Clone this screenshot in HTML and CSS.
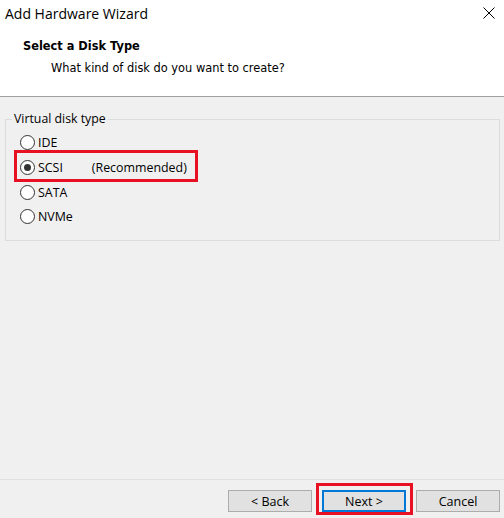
FILE: index.html
```html
<!DOCTYPE html>
<html>
<head>
<meta charset="utf-8">
<link rel="stylesheet" href="styles.css">
</head>
<body>
<div class="window">
  <div class="titlebar">
    <span class="title">Add Hardware Wizard</span>
    <svg class="close" width="12" height="12" viewBox="0 0 12 12"><path d="M0.5 0.5 L11.5 11.5 M11.5 0.5 L0.5 11.5" stroke="#000" stroke-width="1" fill="none"/></svg>
  </div>
  <div class="header">
    <div class="h-title">Select a Disk Type</div>
    <div class="h-sub">What kind of disk do you want to create?</div>
  </div>
  <div class="body">
    <fieldset class="group">
      <legend>Virtual disk type</legend>
      <div class="radio"><span class="dot"></span><span class="lbl">IDE</span></div>
      <div class="radio highlight"><span class="dot checked"></span><span class="lbl">SCSI</span><span class="rec">(Recommended)</span></div>
      <div class="radio"><span class="dot"></span><span class="lbl">SATA</span></div>
      <div class="radio"><span class="dot"></span><span class="lbl">NVMe</span></div>
    </fieldset>
  </div>
  <div class="footer">
    <button class="btn">&lt; Back</button>
    <button class="btn default">Next &gt;</button>
    <button class="btn">Cancel</button>
  </div>
</div>
</body>
</html>
```
FILE: styles.css
```css
html, body {
  margin: 0;
  padding: 0;
}
body {
  width: 504px;
  height: 518px;
  overflow: hidden;
  background: #f0f0f0;
  font-family: "Open Sans", "Noto Sans", sans-serif;
  color: #000;
}
.window {
  display: flex;
  flex-direction: column;
  height: 518px;
}
.titlebar {
  background: #fff;
  height: 30px;
  display: flex;
  align-items: center;
  justify-content: space-between;
  padding: 0 9px 0 5px;
}
.title {
  font-family: "Open Sans", sans-serif;
  font-size: 14px;
  line-height: 20px;
  margin-top: -2px;
}
.close {
  display: block;
  margin-top: -4px;
}
.header {
  background: #fff;
  height: 67px;
  border-bottom: 1px solid #a0a0a0;
  box-sizing: border-box;
}
.h-title {
  font-family: "DejaVu Sans", sans-serif;
  font-weight: bold;
  font-size: 11.4px;
  line-height: 14px;
  padding-left: 23px;
  margin-top: 9px;
}
.h-sub {
  font-family: "DejaVu Sans", sans-serif;
  font-size: 11.4px;
  line-height: 14px;
  padding-left: 51px;
  margin-top: 8px;
}
.body {
  flex: 1;
  padding: 15px 4px 0 5px;
}
.group {
  margin: 0;
  border: 1px solid #dcdcdc;
  padding: 4.5px 0 6px 6px;
  height: 129px;
  box-sizing: border-box;
  display: flex;
  flex-direction: column;
}
.group legend {
  font-family: "Open Sans", sans-serif;
  font-size: 12.3px;
  line-height: 14px;
  padding: 0 2px;
  margin-left: 0;
}
.radio {
  display: flex;
  align-items: center;
  height: 24.7px;
  flex: none;
  font-family: "Open Sans", sans-serif;
  font-size: 12.4px;
  position: relative;
  padding-left: 8px;
}
.radio.highlight::after {
  content: "";
  position: absolute;
  left: 2px;
  top: -5.5px;
  width: 184px;
  height: 32px;
  border: 3px solid #e81123;
  box-sizing: border-box;
}
.dot {
  width: 13px;
  height: 13px;
  border: 1px solid #333;
  border-radius: 50%;
  background: #fff;
  margin-right: 3px;
  box-sizing: content-box;
  position: relative;
}
.dot.checked::after {
  content: "";
  position: absolute;
  left: 3px;
  top: 3px;
  width: 7px;
  height: 7px;
  border-radius: 50%;
  background: #333;
}
.rec {
  margin-left: 29px;
}
.footer {
  height: 39px;
  border-top: 1px solid #dfdfdf;
  box-sizing: border-box;
  display: flex;
  align-items: flex-start;
  justify-content: flex-end;
  padding: 10px 4px 0 0;
  gap: 10px;
}
.btn {
  width: 84px;
  height: 22px;
  background: #e1e1e1;
  border: 1px solid #adadad;
  font-family: "Open Sans", sans-serif;
  font-size: 12.5px;
  color: #000;
  padding: 0;
  margin: 0;
  position: relative;
}
.btn.default {
  border: 2px solid #0078d7;
}
.btn.default::after {
  content: "";
  position: absolute;
  left: -8px;
  top: -9px;
  width: 97px;
  height: 32px;
  border: 3px solid #e81123;
  box-sizing: border-box;
}
```
